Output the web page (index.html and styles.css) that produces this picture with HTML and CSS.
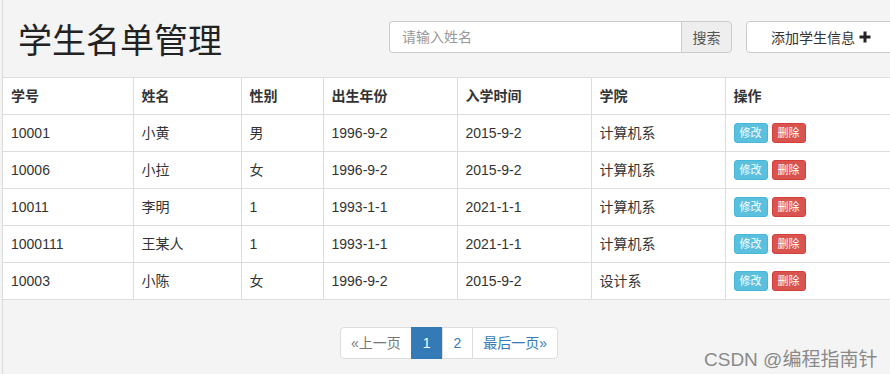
FILE: index.html
```html
<!DOCTYPE html>
<html lang="zh-CN">
<head>
  <meta charset="UTF-8" />
  <meta name="viewport" content="width=device-width, initial-scale=1.0" />
  <title>学生名单管理</title>
  <link rel="stylesheet" href="styles.css">
</head>
<body>

  <div class="page">
    <div class="header">
      <h1 class="title">学生名单管理</h1>
      <div class="search">
        <input class="search-input" type="text" placeholder="请输入姓名">
        <button class="search-btn">搜索</button>
      </div>
      <button class="add-btn">添加学生信息
        <svg class="plus" width="12" height="12" viewBox="0 0 12 12"><path d="M6 0.5V11.5M0.5 6H11.5" stroke="#222" stroke-width="3"/></svg>
      </button>
    </div>

    <table class="students">
      <colgroup>
        <col class="c-id">
        <col class="c-name">
        <col class="c-sex">
        <col class="c-date">
        <col class="c-date">
        <col class="c-date">
        <col>
      </colgroup>
      <thead>
        <tr>
          <th>学号</th><th>姓名</th><th>性别</th><th>出生年份</th><th>入学时间</th><th>学院</th><th>操作</th>
        </tr>
      </thead>
      <tbody>
        <tr>
          <td>10001</td><td>小黄</td><td>男</td><td>1996-9-2</td><td>2015-9-2</td><td>计算机系</td>
          <td><div class="ops"><button class="btn-xs info">修改</button><button class="btn-xs danger">删除</button></div></td>
        </tr>
        <tr>
          <td>10006</td><td>小拉</td><td>女</td><td>1996-9-2</td><td>2015-9-2</td><td>计算机系</td>
          <td><div class="ops"><button class="btn-xs info">修改</button><button class="btn-xs danger">删除</button></div></td>
        </tr>
        <tr>
          <td>10011</td><td>李明</td><td>1</td><td>1993-1-1</td><td>2021-1-1</td><td>计算机系</td>
          <td><div class="ops"><button class="btn-xs info">修改</button><button class="btn-xs danger">删除</button></div></td>
        </tr>
        <tr>
          <td>1000111</td><td>王某人</td><td>1</td><td>1993-1-1</td><td>2021-1-1</td><td>计算机系</td>
          <td><div class="ops"><button class="btn-xs info">修改</button><button class="btn-xs danger">删除</button></div></td>
        </tr>
        <tr>
          <td>10003</td><td>小陈</td><td>女</td><td>1996-9-2</td><td>2015-9-2</td><td>设计系</td>
          <td><div class="ops"><button class="btn-xs info">修改</button><button class="btn-xs danger">删除</button></div></td>
        </tr>
      </tbody>
    </table>

    <div class="pager">
      <ul class="pagination">
        <li class="disabled"><a>«上一页</a></li>
        <li class="active num"><a>1</a></li>
        <li class="num"><a>2</a></li>
        <li><a>最后一页»</a></li>
      </ul>
    </div>

    <div class="watermark">CSDN @编程指南针</div>
  </div>

</body>
</html>
```

FILE: styles.css
```css
html, body {
  margin: 0;
  height: 100%;
  overflow: hidden;
}
body {
  background: #f4f4f4;
  font-family: "Liberation Sans", "Noto Sans CJK SC", sans-serif;
  font-size: 14px;
  color: #333;
}
.page {
  position: relative;
  margin-left: 2px;
  border-left: 1px solid #dcdcdc;
  height: 100%;
  width: 900px;
}
.header {
  display: flex;
  align-items: flex-start;
  height: 77px;
}
.title {
  margin: 21px 0 0 15px;
  font-size: 34px;
  font-weight: normal;
  line-height: 40px;
  color: #222;
}
.search {
  display: flex;
  margin: 21px 0 0 167px;
  height: 32px;
}
.search-input {
  width: 292px;
  height: 32px;
  box-sizing: border-box;
  padding: 6px 12px;
  border: 1px solid #ccc;
  border-right: none;
  border-radius: 4px 0 0 4px;
  font-family: inherit;
  font-size: 14px;
  background: #fff;
  outline: none;
}
.search-input::placeholder {
  color: #999;
}
.search-btn {
  width: 51px;
  height: 32px;
  border: 1px solid #ccc;
  border-radius: 0 4px 4px 0;
  background: #eee;
  color: #555;
  font-family: inherit;
  font-size: 14px;
  padding: 0;
}
.add-btn {
  margin: 21px 0 0 14px;
  width: 150px;
  height: 32px;
  border: 1px solid #ccc;
  border-radius: 4px;
  background: #fff;
  color: #333;
  font-family: inherit;
  font-size: 14px;
  padding: 0;
  display: flex;
  align-items: center;
  justify-content: center;
  gap: 4px;
}
.students {
  border-collapse: collapse;
  table-layout: fixed;
  width: 900px;
  background: #fff;
}
.c-id { width: 130px; }
.c-name { width: 108px; }
.c-sex { width: 82px; }
.c-date { width: 134px; }
.students th,
.students td {
  border: 1px solid #ddd;
  padding: 8px;
  height: 20px;
  line-height: 20px;
  text-align: left;
  white-space: nowrap;
  box-sizing: content-box;
}
.students th {
  font-weight: bold;
}
.students th:first-child,
.students td:first-child {
  border-left: none;
}
.ops {
  display: flex;
  align-items: center;
  gap: 4px;
  height: 20px;
}
.btn-xs {
  font-family: inherit;
  font-size: 11px;
  line-height: 16px;
  height: 20px;
  padding: 1px 5px;
  border: 1px solid;
  border-radius: 3px;
  color: #fff;
  box-sizing: border-box;
}
.btn-xs.info {
  background: #5bc0de;
  border-color: #46b8da;
}
.btn-xs.danger {
  background: #d9534f;
  border-color: #d43f3a;
}
.pager {
  display: flex;
  justify-content: center;
  width: 892px;
  margin-top: 27px;
}
.pagination {
  display: flex;
  list-style: none;
  margin: 0;
  padding: 0;
}
.pagination a {
  display: block;
  padding: 5px 10px;
  line-height: 20px;
  background: #fff;
  border: 1px solid #ddd;
  margin-left: -1px;
  color: #337ab7;
}
.pagination .num a {
  padding: 5px 11px;
}
.pagination li:first-child a {
  margin-left: 0;
  border-radius: 4px 0 0 4px;
}
.pagination li:last-child a {
  border-radius: 0 4px 4px 0;
}
.pagination .disabled a {
  color: #777;
}
.pagination .active a {
  background: #337ab7;
  border-color: #337ab7;
  color: #fff;
}
.watermark {
  position: absolute;
  left: 701px;
  top: 344px;
  font-size: 19px;
  color: #8a8a8a;
  white-space: nowrap;
}
```
